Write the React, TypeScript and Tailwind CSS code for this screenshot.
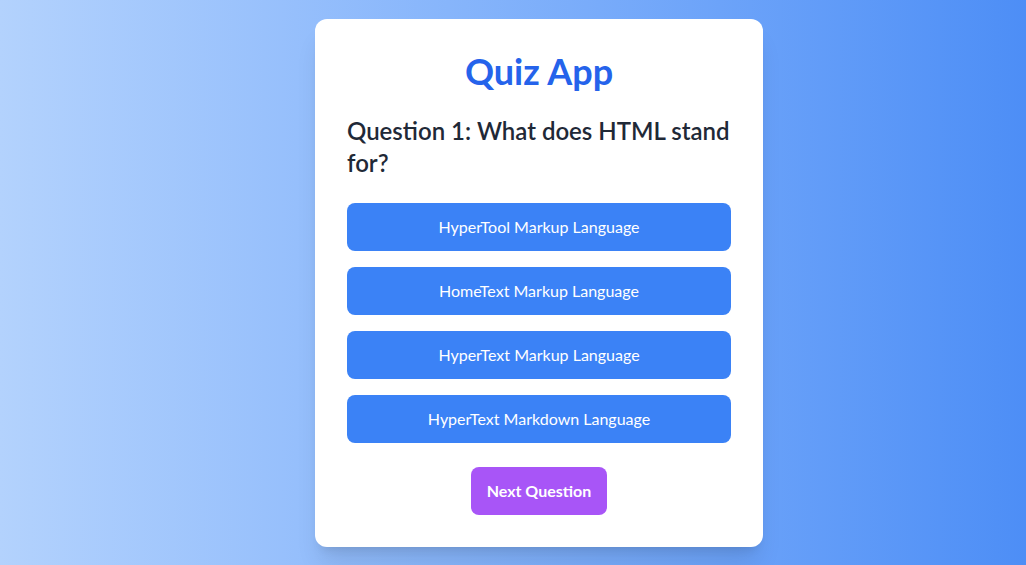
import { useState } from "react"

const questions = [
  {
    question: "What does HTML stand for?",
    options: [
      "HyperTool Markup Language",
      "HomeText Markup Language",
      "HyperText Markup Language",
      "HyperText Markdown Language",
    ],
  },
]

export default function App() {
  const [current, setCurrent] = useState(0)
  const q = questions[current]

  return (
    <div
      className="min-h-screen flex items-center justify-center pl-[52px] bg-gradient-to-r from-[#b3d2fd] to-[#4d8ef6]"
      style={{ fontFamily: "Lato, 'Liberation Sans', sans-serif" }}
    >
      <div className="w-full max-w-md bg-white rounded-xl shadow-xl p-8">
        <h1 className="text-4xl font-bold text-center text-[#2563eb] mb-6">Quiz App</h1>
        <h2 className="text-2xl font-semibold text-[#1f2937] mb-6">
          Question {current + 1}: {q.question}
        </h2>
        <div className="flex flex-col gap-4">
          {q.options.map((opt) => (
            <button key={opt} className="w-full py-3 px-4 rounded-lg bg-[#3b82f6] text-white text-base">
              {opt}
            </button>
          ))}
        </div>
        <div className="flex justify-center mt-6">
          <button
            className="px-4 py-3 rounded-lg bg-[#a855f7] text-white font-bold"
            onClick={() => setCurrent((c) => (c + 1) % questions.length)}
          >
            Next Question
          </button>
        </div>
      </div>
    </div>
  )
}
